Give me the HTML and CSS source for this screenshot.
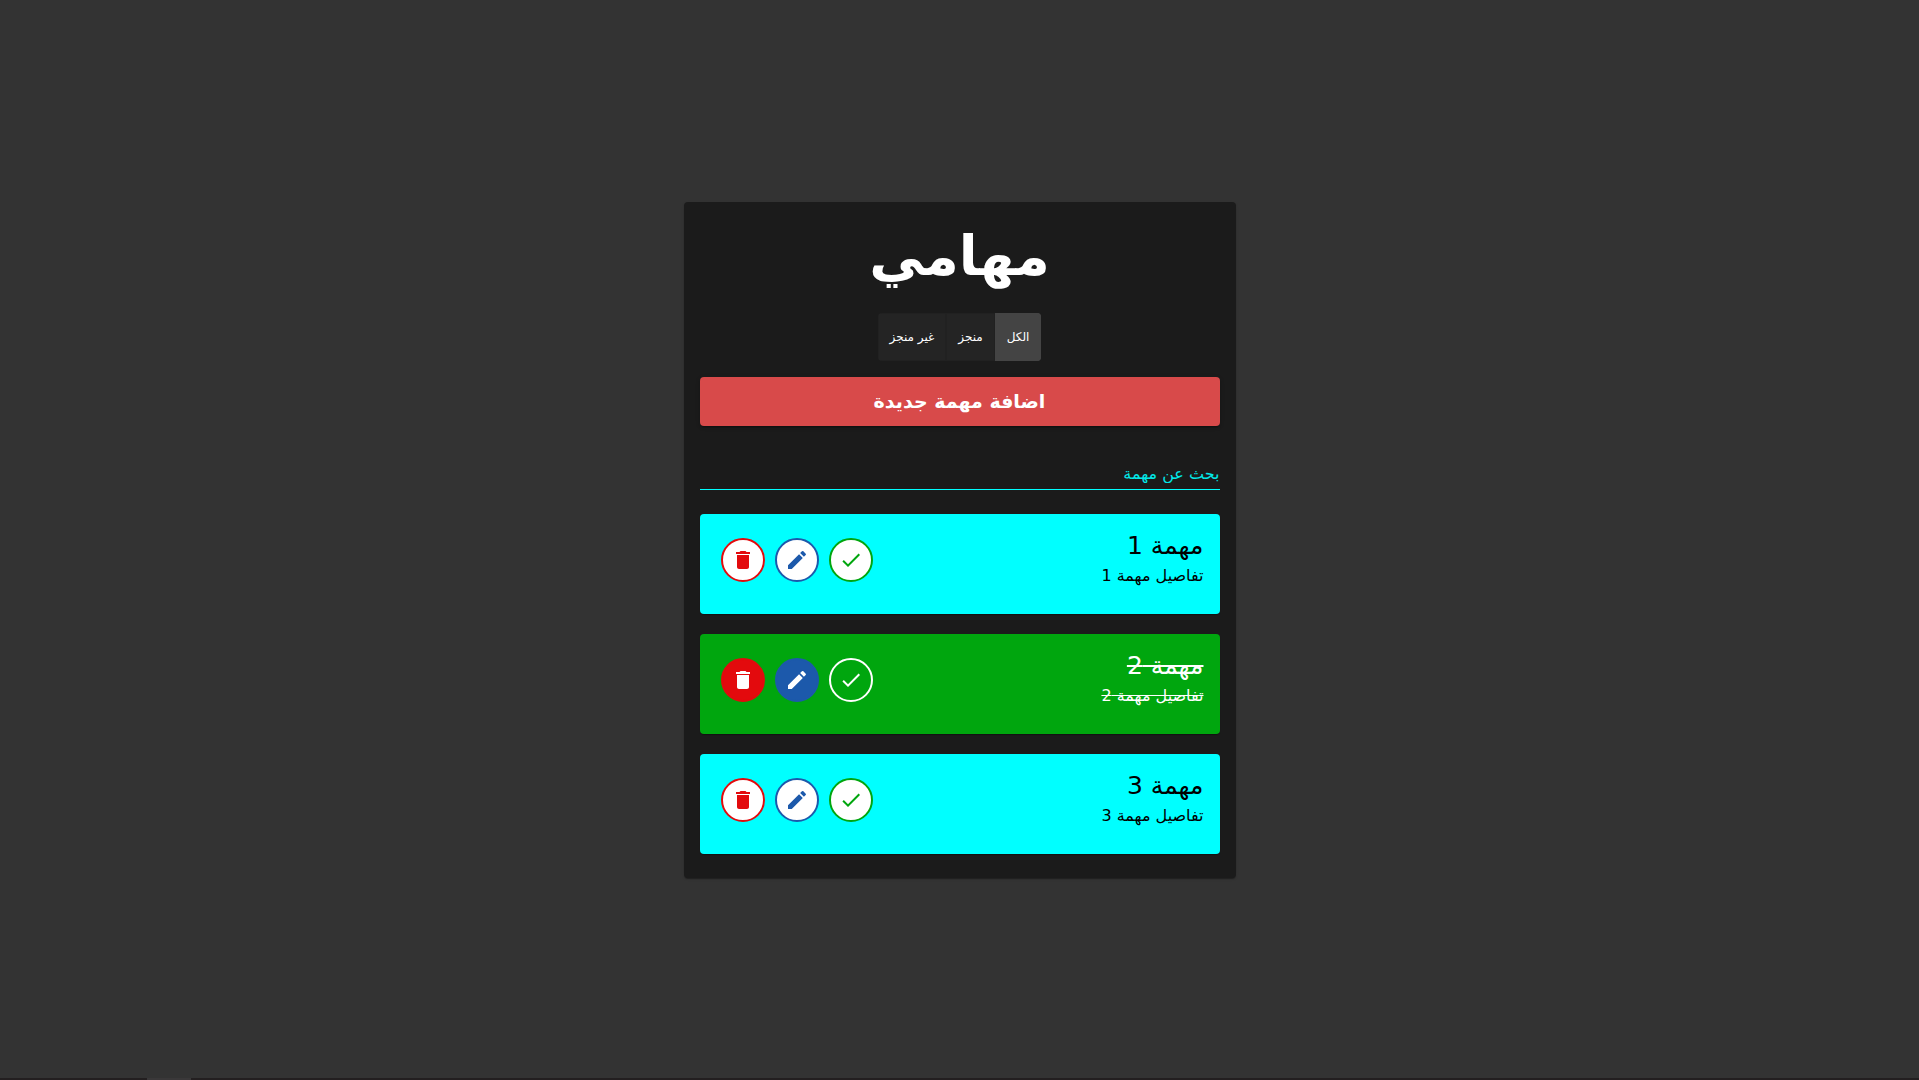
FILE: index.html
```html
<!DOCTYPE html>
<html lang="ar" dir="rtl">
<head>
<meta charset="utf-8">
<meta name="viewport" content="width=device-width, initial-scale=1">
<title>مهامي</title>
<link rel="stylesheet" href="styles.css">
</head>
<body>
<svg class="sprite" aria-hidden="true">
  <symbol id="check" viewBox="0 0 24 24"><path d="M9 16.17 4.83 12l-1.42 1.41L9 19 21 7l-1.41-1.41z"/></symbol>
  <symbol id="edit" viewBox="0 0 24 24"><path d="M3 17.25V21h3.75L17.81 9.94l-3.75-3.75L3 17.25zM20.71 7.04c.39-.39.39-1.02 0-1.41l-2.34-2.34a.9959.9959 0 0 0-1.41 0l-1.83 1.83 3.75 3.75 1.83-1.83z"/></symbol>
  <symbol id="delete" viewBox="0 0 24 24"><path d="M6 19c0 1.1.9 2 2 2h8c1.1 0 2-.9 2-2V7H6v12zM19 4h-3.5l-1-1h-5l-1 1H5v2h14V4z"/></symbol>
</svg>
<main class="page">
  <section class="card">
    <h1 class="title">مهامي</h1>
    <div class="filters" role="group" aria-label="تصفية المهام">
      <button type="button" class="filter filter-active" aria-pressed="true">الكل</button>
      <button type="button" class="filter" aria-pressed="false">منجز</button>
      <button type="button" class="filter" aria-pressed="false">غير منجز</button>
    </div>
    <button type="button" class="add">اضافة مهمة جديدة</button>
    <input class="search" type="text" placeholder="بحث عن مهمة" aria-label="بحث عن مهمة">
    <ul class="tasks">
      <li class="task">
        <div>
          <h2 class="task-title">مهمة 1</h2>
          <p class="task-details">تفاصيل مهمة 1</p>
        </div>
        <div class="actions">
          <button type="button" class="action check" aria-label="انجاز"><svg><use href="#check"/></svg></button>
          <button type="button" class="action edit" aria-label="تعديل"><svg><use href="#edit"/></svg></button>
          <button type="button" class="action delete" aria-label="حذف"><svg><use href="#delete"/></svg></button>
        </div>
      </li>
      <li class="task task-done">
        <div>
          <h2 class="task-title">مهمة 2</h2>
          <p class="task-details">تفاصيل مهمة 2</p>
        </div>
        <div class="actions">
          <button type="button" class="action check" aria-label="انجاز"><svg><use href="#check"/></svg></button>
          <button type="button" class="action edit" aria-label="تعديل"><svg><use href="#edit"/></svg></button>
          <button type="button" class="action delete" aria-label="حذف"><svg><use href="#delete"/></svg></button>
        </div>
      </li>
      <li class="task">
        <div>
          <h2 class="task-title">مهمة 3</h2>
          <p class="task-details">تفاصيل مهمة 3</p>
        </div>
        <div class="actions">
          <button type="button" class="action check" aria-label="انجاز"><svg><use href="#check"/></svg></button>
          <button type="button" class="action edit" aria-label="تعديل"><svg><use href="#edit"/></svg></button>
          <button type="button" class="action delete" aria-label="حذف"><svg><use href="#delete"/></svg></button>
        </div>
      </li>
    </ul>
  </section>
</main>
<div class="edge"><div class="edge-mark"></div></div>
</body>
</html>
```
FILE: styles.css
```css
* { box-sizing: border-box; }

body {
  margin: 0;
  min-height: 100vh;
  display: flex;
  flex-direction: column;
  background: #333;
  color: #fff;
  font-family: "DejaVu Sans", sans-serif;
}

button, input { font-family: inherit; }

.sprite { display: none; }

.page {
  flex: 1;
  display: flex;
  align-items: center;
  justify-content: center;
}

.card {
  width: 100%;
  max-width: 552px;
  padding: 16px 16px 24px;
  background: #1b1b1b;
  border-radius: 4px;
  box-shadow: 0 2px 1px -1px rgba(0, 0, 0, .2), 0 1px 1px rgba(0, 0, 0, .14), 0 1px 3px rgba(0, 0, 0, .12);
  display: flex;
  flex-direction: column;
}

.title {
  margin: 0 0 19px;
  font-size: 55px;
  line-height: 76px;
  text-align: center;
}

.filters {
  display: flex;
  align-self: center;
  margin-bottom: 16px;
  border-radius: 4px;
  overflow: hidden;
}

.filter {
  height: 48px;
  padding: 0 11px;
  border: 1px solid #212121;
  background: #242424;
  color: #fff;
  font-size: 12px;
}

.filter-active {
  border-color: #444;
  background: #444;
}

.add {
  height: 49px;
  margin-bottom: 32px;
  padding: 0 16px 2px;
  border: 0;
  border-radius: 4px;
  background: #d84a4a;
  color: #fff;
  font-size: 19px;
  font-weight: bold;
  box-shadow: 0 3px 1px -2px rgba(0, 0, 0, .2), 0 2px 2px rgba(0, 0, 0, .14), 0 1px 5px rgba(0, 0, 0, .12);
}

.search {
  height: 32px;
  padding: 0;
  border: 0;
  border-bottom: 1px solid #0ff;
  outline: 0;
  background: transparent;
  color: #0ff;
  font-size: 16px;
}

.search::placeholder { color: #0ff; opacity: .9; }

.tasks {
  display: flex;
  flex-direction: column;
  gap: 20px;
  margin: 24px 0 0;
  padding: 0;
  list-style: none;
}

.task {
  display: flex;
  justify-content: space-between;
  min-height: 100px;
  padding: 16px 16px 16px 21px;
  border-radius: 4px;
  background: #0ff;
  color: #000;
  box-shadow: 0 2px 1px -1px rgba(0, 0, 0, .2), 0 1px 1px rgba(0, 0, 0, .14);
}

.task-title {
  margin: 0;
  font-size: 25px;
  font-weight: normal;
  line-height: 32px;
}

.task-details {
  margin: 0;
  font-size: 16px;
  line-height: 28px;
}

.task-done {
  background: #00a60e;
  color: #fff;
  text-decoration: line-through;
}

.actions {
  display: flex;
  gap: 10px;
  padding-top: 8px;
}

.action {
  width: 44px;
  height: 44px;
  padding: 8px;
  border: 2px solid;
  border-radius: 50%;
  background: #fff;
}

.action svg {
  display: block;
  width: 24px;
  height: 24px;
  fill: currentColor;
}

.check { color: #00a60e; }
.edit { color: #1c59ab; }
.delete { color: #e30a0d; }

.task-done .action { color: #fff; }
.task-done .check { background: transparent; }
.task-done .edit { background: #1c59ab; border-color: #1c59ab; }
.task-done .delete { background: #e30a0d; border-color: #e30a0d; }

/* thin strip along the bottom edge of the window */
.edge {
  height: 2px;
  margin-top: -2px;
  display: flex;
  justify-content: flex-end;
  background: #231f20;
}

.edge-mark {
  width: 44px;
  margin-left: 147px;
  background: #3a3839;
}
```
